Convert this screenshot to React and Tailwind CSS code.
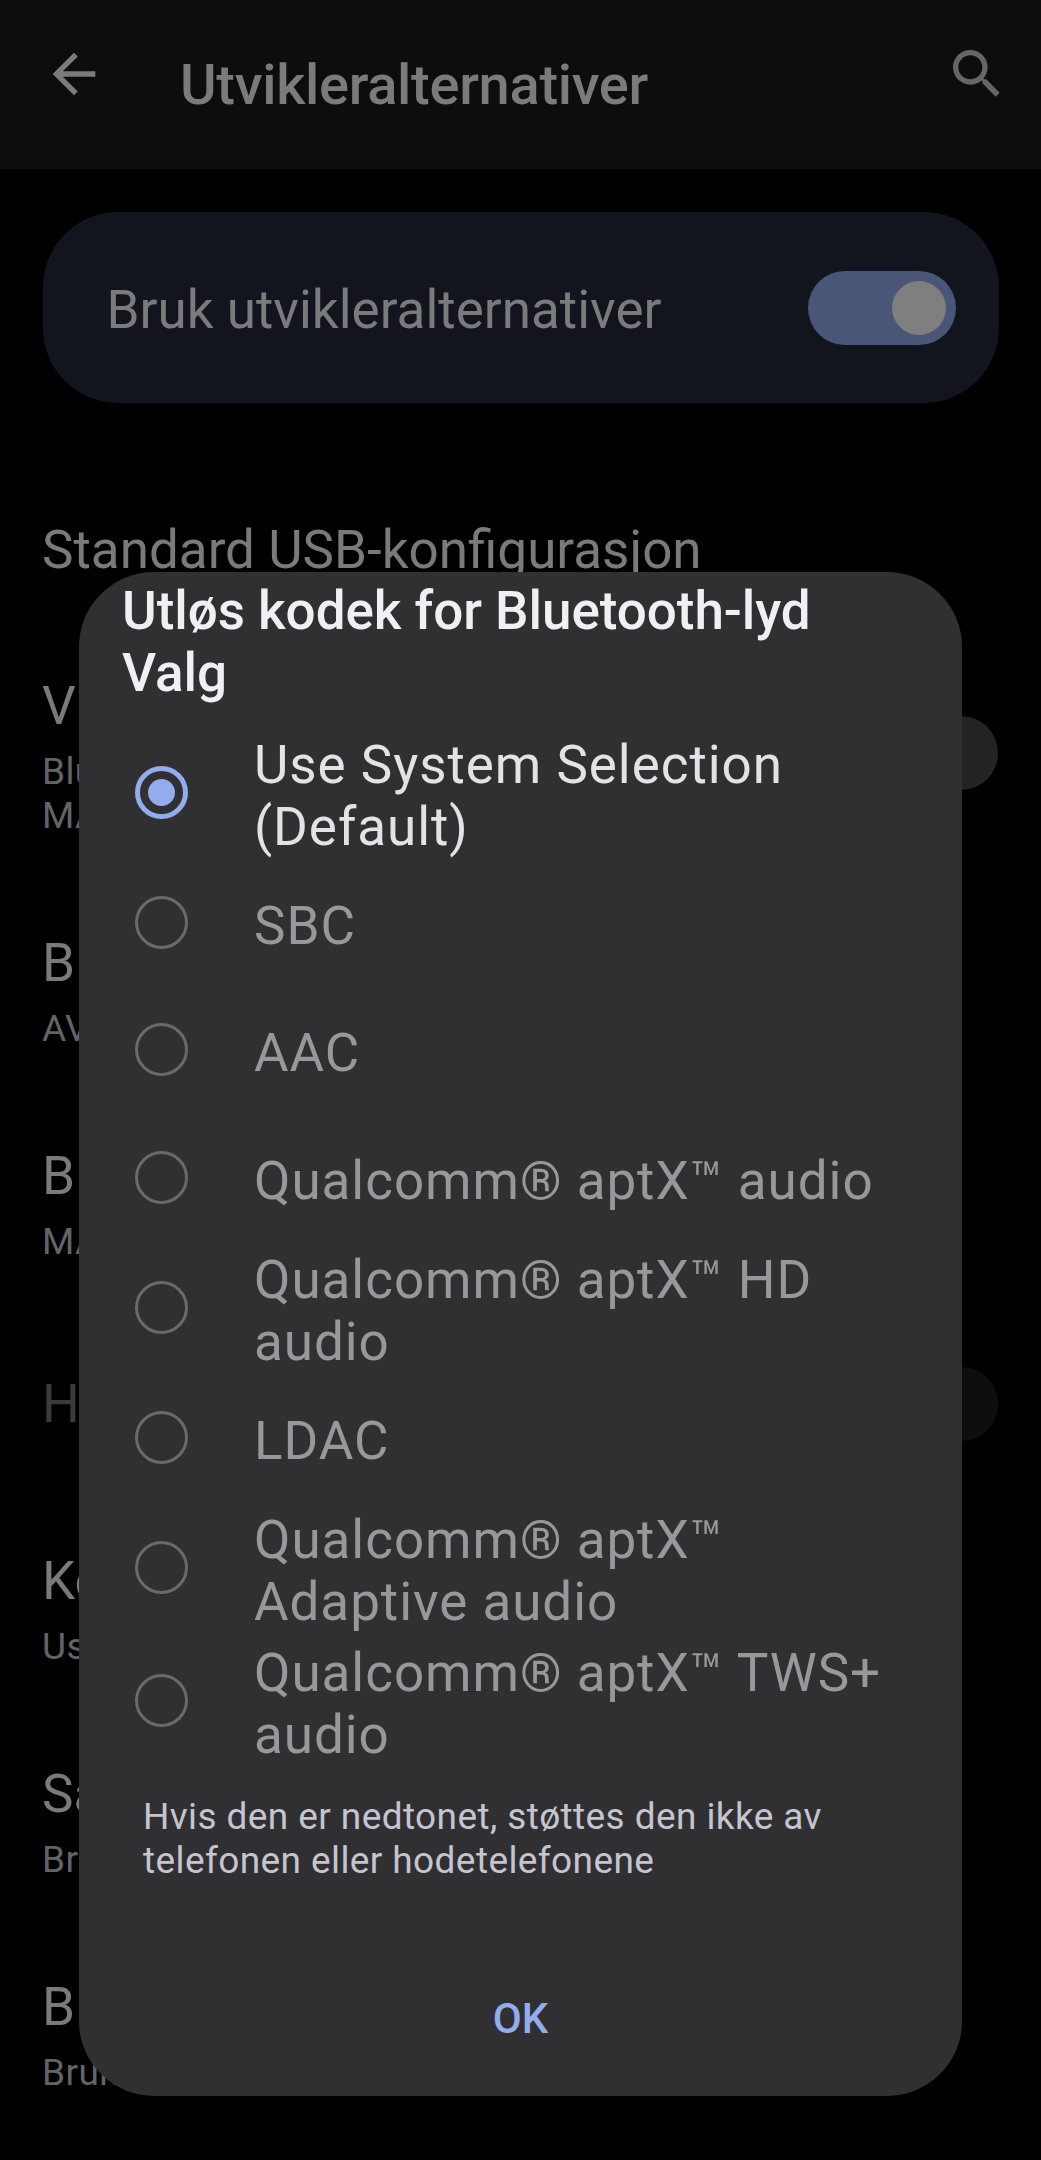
// Rows behind the dialog, only their leading letters stay visible
const settings = [
  { title: "V", summary: ["Blu", "MA"], toggle: "bg-[#232325]", height: "h-[257px]" },
  { title: "B", summary: ["AV"], height: "h-[213px]" },
  { title: "B", summary: ["MA"], height: "h-[213px]" },
  { title: "H", disabled: true, toggle: "bg-[#0e0e0f]", height: "h-[192px]" },
  { title: "Ko", summary: ["Us"], height: "h-[213px]" },
  { title: "Sa", summary: ["Br"], height: "h-[213px]" },
  { title: "B", summary: ["Bruk"], height: "h-[213px]" },
];

const codecs = [
  { lines: ["Use System Selection", "(Default)"], selected: true },
  { lines: ["SBC"] },
  { lines: ["AAC"] },
  { lines: ["Qualcomm® aptX™ audio"] },
  { lines: ["Qualcomm® aptX™ HD", "audio"] },
  { lines: ["LDAC"] },
  { lines: ["Qualcomm® aptX™", "Adaptive audio"] },
  { lines: ["Qualcomm® aptX™ TWS+", "audio"] },
];

function BackIcon() {
  return (
    <svg viewBox="0 0 24 24" className="w-16 h-16 shrink-0" fill="currentColor">
      <path d="M20 11H7.83l5.59-5.59L12 4l-8 8 8 8 1.41-1.41L7.83 13H20v-2z" />
    </svg>
  );
}

function SearchIcon() {
  return (
    <svg viewBox="0 0 24 24" className="w-16 h-16 shrink-0" fill="currentColor">
      <path d="M15.5 14h-.79l-.28-.27C15.41 12.59 16 11.11 16 9.5 16 5.91 13.09 3 9.5 3S3 5.91 3 9.5 5.91 16 9.5 16c1.61 0 3.09-.59 4.23-1.57l.27.28v.79l5 4.99L20.49 19l-4.99-5zm-6 0C7.01 14 5 11.99 5 9.5S7.01 5 9.5 5 14 7.01 14 9.5 11.99 14 9.5 14z" />
    </svg>
  );
}

function SettingRow({ title, summary, toggle, disabled, height }) {
  return (
    <div className={`flex items-start justify-between pl-[42px] pr-[43px] ${height}`}>
      <div className={disabled ? "pt-[62px]" : "pt-[47px]"}>
        <div className={`text-[53px] leading-[62px] whitespace-nowrap ${disabled ? "text-[#3b3b3b]" : "text-[#7a7a7a]"}`}>
          {title}
        </div>
        {summary && (
          <div className="mt-[13px] text-[37px] leading-[44px] tracking-[0.4px] whitespace-nowrap text-[#646468]">
            {summary.map((line) => (
              <div key={line}>{line}</div>
            ))}
          </div>
        )}
      </div>
      {toggle && (
        <div className={`w-[148px] h-[74px] rounded-full shrink-0 ${disabled ? "mt-[56px]" : "mt-[88px]"} ${toggle}`} />
      )}
    </div>
  );
}

function Radio({ selected }) {
  if (selected) {
    return (
      <span className="w-[53px] h-[53px] shrink-0 rounded-full border-[5px] border-[#92acec] flex items-center justify-center">
        <span className="w-[27px] h-[27px] rounded-full bg-[#92acec]" />
      </span>
    );
  }
  return <span className="w-[53px] h-[53px] shrink-0 rounded-full border-[3px] border-[#6a696d]" />;
}

function CodecOption({ lines, selected }) {
  return (
    <div className={`flex items-center pl-14 ${lines.length > 1 ? "h-[132.8px]" : "h-[127.4px]"}`}>
      <Radio selected={selected} />
      <div
        className={`ml-[66px] pt-[7px] text-[53px] leading-[62px] tracking-[0.95px] whitespace-nowrap ${
          selected ? "text-[#e4e2e6]" : "text-[#98979b]"
        }`}
      >
        {lines.map((line) => (
          <div key={line}>{line}</div>
        ))}
      </div>
    </div>
  );
}

export default function App() {
  return (
    <div className="relative w-[1041px] h-[2160px] overflow-hidden bg-black font-[Roboto,sans-serif]">
      <header className="h-[169px] flex items-start bg-[#0d0d0f] pl-[42px] pr-[32px] text-[#7b7b7b]">
        <div className="pt-[42px]">
          <BackIcon />
        </div>
        <h1 className="ml-[74px] pt-[52px] flex-1 text-[56px] leading-[66px] tracking-[-0.3px] font-medium text-[#7b7b7b]">
          Utvikleralternativer
        </h1>
        <div className="pt-[42px] text-[#666668]">
          <SearchIcon />
        </div>
      </header>

      <div className="mt-[43px] mx-[42.5px] h-[191px] rounded-[75px] bg-[#12151e] flex items-center justify-between pl-16 pr-[42.5px]">
        <span className="pt-[5px] text-[53px] leading-[62px] text-[#7b7b7b]">Bruk utvikleralternativer</span>
        <div className="w-[148px] h-[74px] rounded-full bg-[#495678] flex items-center justify-end pr-[10px]">
          <div className="w-[54px] h-[54px] rounded-full bg-[#7f7f7f]" />
        </div>
      </div>

      <div className="pt-[69px]">
        <SettingRow title="Standard USB-konfigurasjon" height="h-[156px]" />
        {settings.map((row, i) => (
          <SettingRow key={i} {...row} />
        ))}
      </div>

      <div className="absolute left-[79px] top-[572px] w-[883px] h-[1524px] rounded-[75px] bg-[#303032] flex flex-col">
        <h2 className="pt-2 pl-[43px] h-[154px] text-[53px] leading-[62px] tracking-[-0.04px] font-medium text-[#f1eff4]">
          Utløs kodek for Bluetooth-lyd
          <br />
          Valg
        </h2>
        <div>
          {codecs.map((codec) => (
            <CodecOption key={codec.lines.join(" ")} {...codec} />
          ))}
        </div>
        <p className="mt-[28px] pl-16 text-[37px] leading-[44px] tracking-[0.4px] text-[#c5c4d0]">
          Hvis den er nedtonet, støttes den ikke av
          <br />
          telefonen eller hodetelefonene
        </p>
        <button className="mt-[111px] self-center text-[42px] leading-[50px] font-medium text-[#92acec]">OK</button>
      </div>
    </div>
  );
}
